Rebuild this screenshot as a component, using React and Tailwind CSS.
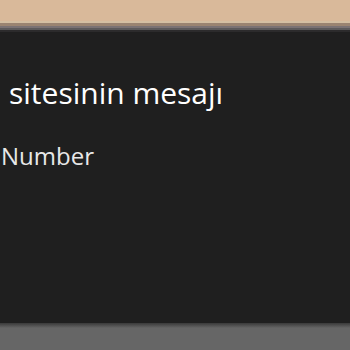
import React from "react";

const App = () => {
  return (
    <div className="w-[350px] h-[350px] overflow-hidden flex flex-col bg-[#666666]">
      {/* page behind the dialog */}
      <div className="h-[21px] bg-[#d9b99a]" />
      <div className="h-[2px] bg-[#d4bfa3]" />
      <div className="h-[3px] bg-[#9a8472]" />
      <div className="h-[2px] bg-[#7a7274]" />
      <div className="h-[2px] bg-[#5c5a5c]" />
      <div className="h-[2px] bg-[#2c2b2c]" />

      {/* dialog */}
      <div className="h-[291px] bg-[#1f1f1f] text-white font-['Open_Sans',sans-serif] overflow-hidden">
        <div className="pt-[41px] pl-[9px] text-[30px] leading-[40px] whitespace-nowrap">
          sitesinin mesajı
        </div>
        <div className="pt-[27px] pl-[1px] text-[24px] leading-[32px] text-[#e8e8e8] whitespace-nowrap">
          Number
        </div>
      </div>

      {/* shadow at dialog edge */}
      <div className="h-[5px] bg-gradient-to-b from-[#3a3a3a] to-[#666666]" />
      <div className="flex-1 bg-[#666666]" />
    </div>
  );
};

export default App;
